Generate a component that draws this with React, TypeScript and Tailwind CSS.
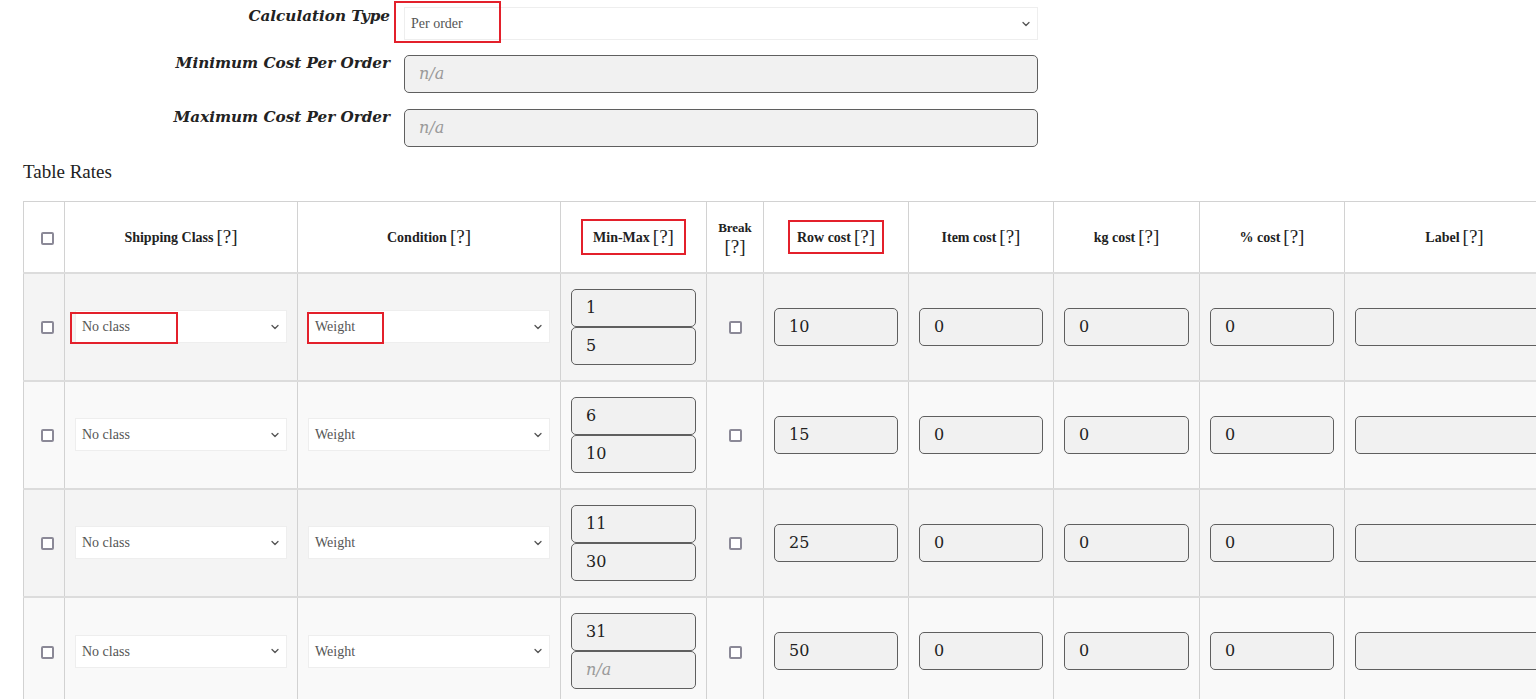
import React from 'react';

const serif = { fontFamily: '"DejaVu Serif", "Liberation Serif", serif' };
const times = { fontFamily: '"Liberation Serif", "DejaVu Serif", serif' };

const rows = [
  { min: '1', max: '5', cost: '10', marked: true },
  { min: '6', max: '10', cost: '15' },
  { min: '11', max: '30', cost: '25' },
  { min: '31', max: '', cost: '50' },
];

function Box({ className = '' }: { className?: string }) {
  return <span className={`pointer-events-none absolute border-2 border-[#e3202b] ${className}`} />;
}

function Check() {
  return <span className="inline-block h-[13px] w-[13px] rounded-[2px] border-2 border-[#8b8997] bg-white align-middle" />;
}

function Chevron() {
  return (
    <svg className="absolute right-[6px] top-1/2 h-[10px] w-[10px] -translate-y-1/2 text-[#555]" viewBox="0 0 10 10" fill="none">
      <path d="M2 3.5 5 6.5 8 3.5" stroke="currentColor" strokeWidth="1.3" strokeLinecap="round" strokeLinejoin="round" />
    </svg>
  );
}

function Select({ value, className = '', children }: { value: string; className?: string; children?: React.ReactNode }) {
  return (
    <div className={`relative flex items-center border border-[#eeeeee] bg-white text-[14px] text-[#555] ${className}`} style={times}>
      <span className="pl-[6px]">{value}</span>
      <Chevron />
      {children}
    </div>
  );
}

function Field({ value, placeholder, className = '' }: { value?: string; placeholder?: string; className?: string }) {
  return (
    <div className={`flex h-[38px] items-center rounded-[5px] border border-[#5f5f5f] bg-[#f1f1f1] pl-[14px] text-[16px] text-[#222] ${className}`} style={serif}>
      {value ? value : <span className="italic text-[#9a9a9a]">{placeholder}</span>}
    </div>
  );
}

function Head({ label, q = true }: { label: string; q?: boolean }) {
  return (
    <span className="whitespace-nowrap text-[14px] font-bold leading-5 text-[#222]">
      {label}
      {q && <span className="ml-[3px] align-[-1px] text-[19px] font-normal">[?]</span>}
    </span>
  );
}

export default function App() {
  return (
    <div className="relative h-[699px] w-[1536px] overflow-hidden bg-white text-[#222]">
      <div className="flex flex-col pt-[7px]">
        <div className="flex items-start gap-[14px]">
          <div className="-mt-[1px] w-[390px] text-right text-[15.2px] font-bold italic leading-5" style={serif}>Calculation Type</div>
          <Select value="Per order" className="h-[33px] w-[634px]">
            <Box className="-left-[11px] -top-[7px] h-[42px] w-[107px]" />
          </Select>
        </div>
        <div className="mt-[15px] flex items-start gap-[14px]">
          <div className="-mt-[2px] w-[390px] text-right text-[15.2px] font-bold italic leading-5" style={serif}>Minimum Cost Per Order</div>
          <Field placeholder="n/a" className="w-[634px]" />
        </div>
        <div className="mt-[16px] flex items-start gap-[14px]">
          <div className="-mt-[2px] w-[390px] text-right text-[15.2px] font-bold italic leading-5" style={serif}>Maximum Cost Per Order</div>
          <Field placeholder="n/a" className="w-[634px]" />
        </div>
      </div>

      <h3 className="ml-[23px] mt-[13px] text-[19px] leading-6" style={times}>Table Rates</h3>

      <table className="ml-[23px] mt-[17px] table-fixed border-collapse" style={{ ...times, width: 1541 }}>
        <colgroup>
          <col className="w-[41px]" />
          <col className="w-[233px]" />
          <col className="w-[263px]" />
          <col className="w-[146px]" />
          <col className="w-[57px]" />
          <col className="w-[145px]" />
          <col className="w-[145px]" />
          <col className="w-[146px]" />
          <col className="w-[145px]" />
          <col className="w-[220px]" />
        </colgroup>
        <thead>
          <tr className="h-[71px] bg-white text-center">
            <th className="border border-[#d2d2d2] pl-[6px]"><Check /></th>
            <th className="border border-[#d2d2d2]"><Head label="Shipping Class" /></th>
            <th className="border border-[#d2d2d2]"><Head label="Condition" /></th>
            <th className="border border-[#d2d2d2]">
              <span className="relative inline-block px-[12px] py-[6px]">
                <Head label="Min-Max" />
                <Box className="inset-0" />
              </span>
            </th>
            <th className="border border-[#d2d2d2] leading-[19px]">
              <div className="text-[13px] font-bold">Break</div>
              <div className="text-[19px] font-normal">[?]</div>
            </th>
            <th className="border border-[#d2d2d2]">
              <span className="relative inline-block px-[9px] py-[5px]">
                <Head label="Row cost" />
                <Box className="inset-0" />
              </span>
            </th>
            <th className="border border-[#d2d2d2]"><Head label="Item cost" /></th>
            <th className="border border-[#d2d2d2]"><Head label="kg cost" /></th>
            <th className="border border-[#d2d2d2]"><Head label="% cost" /></th>
            <th className="border border-[#d2d2d2]"><Head label="Label" /></th>
          </tr>
        </thead>
        <tbody>
          {rows.map((r, i) => (
            <tr key={i} className={`h-[108px] border-t-2 border-[#dcdcdc] ${i % 2 === 0 ? 'bg-[#f4f4f4]' : 'bg-[#f9f9f9]'}`}>
              <td className="border-x border-[#d2d2d2] pl-[6px] text-center"><Check /></td>
              <td className="border-x border-[#d2d2d2] pl-[10px] pr-[10px]">
                <Select value="No class" className="h-[33px]">
                  {r.marked && <Box className="-left-[6px] top-[1px] h-[32px] w-[108px]" />}
                </Select>
              </td>
              <td className="border-x border-[#d2d2d2] pl-[10px] pr-[10px]">
                <Select value="Weight" className="h-[33px]">
                  {r.marked && <Box className="-left-[2px] top-[1px] h-[32px] w-[77px]" />}
                </Select>
              </td>
              <td className="border-x border-[#d2d2d2] px-[10px]">
                <Field value={r.min} />
                <Field value={r.max} placeholder="n/a" />
              </td>
              <td className="border-x border-[#d2d2d2] text-center"><Check /></td>
              <td className="border-x border-[#d2d2d2] px-[10px]"><Field value={r.cost} /></td>
              <td className="border-x border-[#d2d2d2] px-[10px]"><Field value="0" /></td>
              <td className="border-x border-[#d2d2d2] px-[10px]"><Field value="0" /></td>
              <td className="border-x border-[#d2d2d2] px-[10px]"><Field value="0" /></td>
              <td className="border-x border-[#d2d2d2] px-[10px]"><Field /></td>
            </tr>
          ))}
        </tbody>
      </table>
    </div>
  );
}
